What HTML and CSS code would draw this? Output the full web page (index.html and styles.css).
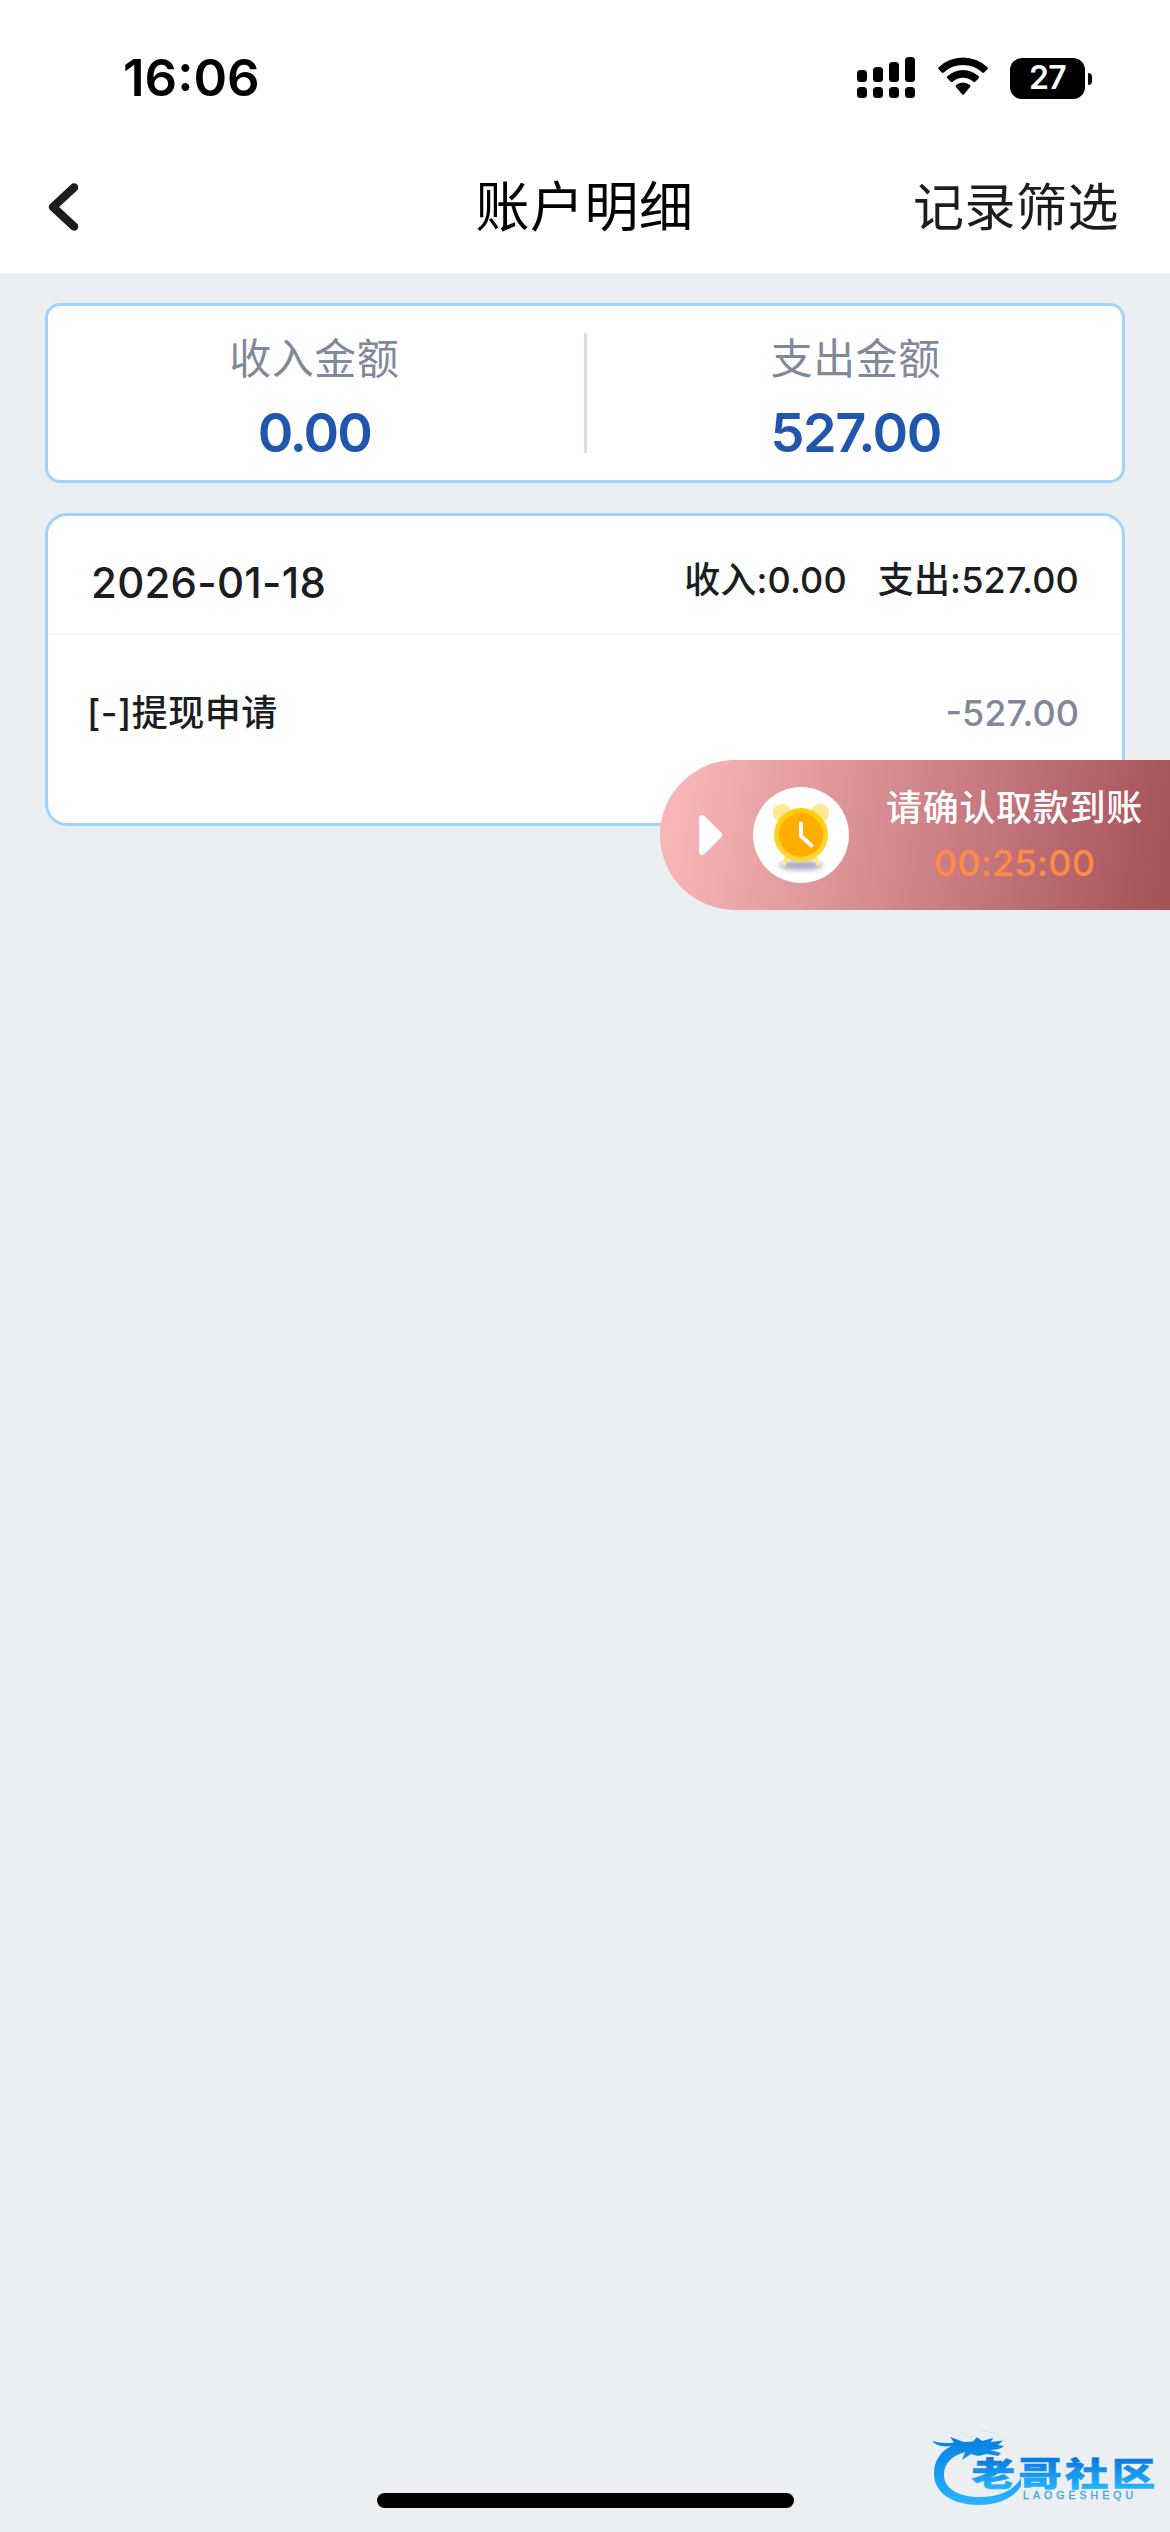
FILE: index.html
```html
<!DOCTYPE html>
<html lang="zh-CN">
<head>
<meta charset="utf-8">
<title>账户明细</title>
<link rel="stylesheet" href="styles.css">
</head>
<body>
<header class="top">
  <div class="status">
    <span class="clock">16:06</span>
    <div class="indicators">
      <svg class="signal" width="58" height="42" viewBox="0 0 58 42">
        <rect x="0" y="13" width="10" height="12" rx="3.5"/><rect x="16" y="10" width="10" height="15" rx="3.5"/><rect x="32" y="5" width="10" height="20" rx="3.5"/><rect x="48" y="0" width="10" height="25" rx="3.5"/>
        <rect x="0" y="30" width="10" height="11" rx="3.5"/><rect x="16" y="30" width="10" height="11" rx="3.5"/><rect x="32" y="30" width="10" height="11" rx="3.5"/><rect x="48" y="30" width="10" height="11" rx="3.5"/>
      </svg>
      <svg class="wifi" width="52" height="42" viewBox="0 0 52 42">
        <path d="M1.6 12.3Q.6 11.3 1.6 10.3A35.5 35.5 0 0 1 50.4 10.3Q51.4 11.3 50.4 12.3L47.2 15.5Q46.2 16.3 45.2 15.5A28 28 0 0 0 6.8 15.5Q5.8 16.3 4.8 15.5Z"/>
        <path d="M10.3 21.2Q9.4 20.2 10.3 19.3A23 23 0 0 1 41.7 19.3Q42.6 20.2 41.7 21.2L38.2 24.7Q37.3 25.5 36.3 24.7A15.5 15.5 0 0 0 15.7 24.7Q14.7 25.5 13.8 24.7Z"/>
        <path d="M19 30Q18 29 19 28A11 11 0 0 1 33 28Q34 29 33 30L27 37.3Q26 38.4 25 37.3Z"/>
      </svg>
      <div class="battery"><span class="level">27</span><span class="nub"></span></div>
    </div>
  </div>
  <nav class="nav">
    <svg class="back" width="30" height="48" viewBox="0 0 30 48"><path d="M26 4.5L5 24L26 43.500"/></svg>
    <h1 class="title">账户明细</h1>
    <span class="filter">记录筛选</span>
  </nav>
</header>
<main class="content">
  <section class="summary">
    <div class="total income"><span class="label">收入金额</span><span class="amount">0.00</span></div>
    <div class="divider"></div>
    <div class="total expense"><span class="label">支出金额</span><span class="amount">527.00</span></div>
  </section>
  <section class="day">
    <div class="day-head"><span class="date">2026-01-18</span><div class="sums"><span>收入:0.00</span><span>支出:527.00</span></div></div>
    <div class="entry"><span class="entry-name">[-]提现申请</span><span class="entry-amount">-527.00</span></div>
  </section>
</main>
<aside class="reminder">
  <svg class="play" width="24" height="42" viewBox="0 0 24 42"><path d="M0 4Q0 1 3 1Q4.500 1 6 2.500L22 18.500Q24.500 21 22 23.500L6 39.500Q4.500 41 3 41Q0 41 0 38Z"/></svg>
  <div class="disc">
    <svg width="96" height="96" viewBox="0 0 96 96">
      <defs>
        <linearGradient id="rim" x1="0" y1="0" x2="0" y2="1"><stop offset="0" stop-color="#ffcb05"/><stop offset="1" stop-color="#ffd640"/></linearGradient>
        <filter id="soft" x="-30%" y="-100%" width="160%" height="300%"><feGaussianBlur stdDeviation="2.5"/></filter>
      </defs>
      <ellipse cx="48" cy="78.500" rx="22" ry="4.500" fill="#aaa7c5" filter="url(#soft)"/>
      <path d="M34 70L31 77M62 70L65 77" stroke="#ffe784" stroke-width="4" stroke-linecap="round"/>
      <circle cx="29" cy="26" r="9.300" fill="#ffea94"/><circle cx="67" cy="26" r="9.300" fill="#ffea94"/>
      <circle cx="48" cy="48" r="27" fill="url(#rim)"/><circle cx="48" cy="48" r="22" fill="#ffae00"/>
      <path d="M48 36.500V49L58.500 58.500" fill="none" stroke="#fff" stroke-width="4" stroke-linecap="round" stroke-linejoin="round"/>
    </svg>
  </div>
  <div class="notice"><span class="notice-text">请确认取款到账</span><span class="countdown">00:25:00</span></div>
</aside>
<svg class="brand" width="226" height="84" viewBox="0 0 226 84">
  <defs><linearGradient id="sea" gradientUnits="userSpaceOnUse" x1="0" y1="14" x2="0" y2="80"><stop offset="0" stop-color="#087fe2"/><stop offset="1" stop-color="#28b4ff"/></linearGradient>
  <linearGradient id="ink" gradientUnits="userSpaceOnUse" x1="0" y1="-27" x2="0" y2="3"><stop offset="0" stop-color="#0879df"/><stop offset="1" stop-color="#25b4ff"/></linearGradient></defs>
  <path fill="url(#sea)" d="M2 17Q12 20 24 18.500L20 13L34 18L43 17.500L47 13L52 17L63 14L61 18L73 16.500L68 21L74 22Q70 26 60 26L71 29L68 32L57 30L48 32L41 30L32 36L35 28C22 32 14 39 14 51C14 65 29 73 50 73C71 73 84 66 91 54V62C84 74 68 81 49 81C23 81 4 69 4 50C4 37 10 28 21 22Q8 24 2 17Z"/>
  <path fill="none" stroke="#cfe4f4" stroke-width=".8" d="M30 8Q38 14 48 13M49 7Q67 7 73 15"/>
  <text class="brand-name" transform="translate(41.500 61.500) scale(1.32 1)" fill="url(#ink)" stroke="url(#ink)" stroke-width=".5">老哥社区</text>
  <text class="brand-latin" x="93" y="74.500" textLength="110" lengthAdjust="spacing">LAOGESHEQU</text>
</svg>
<div class="home"></div>
</body>
</html>
```
FILE: styles.css
```css
* { box-sizing: border-box; }
body {
  margin: 0;
  width: 1170px;
  height: 2532px;
  position: relative;
  overflow: hidden;
  background: #ebeff2;
  color: #1c1d21;
  font-family: Inter, "Noto Sans CJK SC", sans-serif;
}
.top { height: 273px; background: #fff; }
.status {
  height: 141px;
  padding: 15px 79px 0 123px;
  display: flex;
  align-items: center;
  justify-content: space-between;
}
.clock { font-size: 51px; font-weight: 600; line-height: 60px; color: #000; letter-spacing: 0; }
.indicators { display: flex; align-items: center; }
.wifi { margin-left: 22px; margin-right: 21px; }
.battery {
  position: relative;
  width: 75px;
  height: 41px;
  margin-right: 6px;
  border-radius: 12px;
  background: #000;
  display: flex;
  align-items: center;
  justify-content: center;
}
.level { font-size: 32px; font-weight: 600; line-height: 40px; letter-spacing: -.6px; color: #fff; }
.nub { position: absolute; left: 78px; top: 15px; width: 4px; height: 12px; border-radius: 0 4px 4px 0; background: #000; }
.nav {
  height: 132px;
  padding: 0 51px 0 48px;
  display: grid;
  grid-template-columns: 1fr 216px 1fr;
  align-items: center;
}
.back { fill: none; stroke: #1c1d21; stroke-width: 8.5; stroke-linecap: round; stroke-linejoin: round; }
.title { margin: 0; padding-top: 2px; font-size: 54px; font-weight: 400; line-height: 78px; letter-spacing: .5px; color: #000; white-space: nowrap; }
.filter { justify-self: end; padding-top: 2px; font-size: 51px; line-height: 76px; letter-spacing: .5px; }
.content { padding: 30px 45px 0; display: grid; gap: 30px; }
.summary {
  height: 180px;
  border: 3px solid #a0d4ff;
  border-radius: 15px;
  background: #fff;
  display: flex;
  align-items: center;
}
.total { flex: 1; padding-top: 9px; display: flex; flex-direction: column; align-items: center; }
.income { padding-right: 3px; }
.expense { padding-left: 3px; }
.label { font-size: 42px; line-height: 60px; letter-spacing: .5px; font-weight: 400; color: #82889b; }
.amount { margin-top: 11px; font-size: 54px; line-height: 66px; font-weight: 600; letter-spacing: -2px; color: #2156ae; }
.expense .amount { letter-spacing: -1.4px; }
.divider { width: 3px; height: 120px; background: #d8dcec; }
.day { height: 313px; border: 3px solid #a0d4ff; border-radius: 22px; background: #fff; }
.day-head {
  height: 119px;
  padding: 0 43px;
  border-bottom: 2px solid #f8f9fb;
  display: flex;
  justify-content: space-between;
  align-items: center;
}
.date { font-size: 42px; font-weight: 500; line-height: 54px; padding-top: 17px; letter-spacing: .25px; }
.sums { display: flex; gap: 31px; font-size: 36px; line-height: 52px; font-weight: 500; padding-top: 10px; letter-spacing: .15px; }
.entry { height: 156px; padding: 0 43px 0 39px; display: flex; align-items: center; justify-content: space-between; }
.entry-name { font-size: 36px; font-weight: 500; line-height: 52px; letter-spacing: .5px; }
.entry-amount { font-size: 36px; line-height: 52px; font-weight: 500; color: #82889b; }
.reminder {
  position: absolute;
  left: 660px;
  top: 760px;
  width: 510px;
  height: 150px;
  padding-left: 39px;
  border-radius: 75px 0 0 75px;
  background: linear-gradient(100deg, #f8b5b8 5%, #a55259 98%);
  display: flex;
  align-items: center;
}
.play { fill: #fff; }
.disc { width: 96px; height: 96px; margin-left: 30px; border-radius: 50%; background: #fff; }
.disc svg { display: block; }
.notice { margin-left: 37px; display: flex; flex-direction: column; align-items: center; }
.notice-text { font-size: 36px; line-height: 52px; font-weight: 500; letter-spacing: .7px; color: #fff; white-space: nowrap; }
.countdown { margin-top: 3px; font-size: 36px; line-height: 52px; font-weight: 500; letter-spacing: .3px; color: #ff8b46; }
.brand { position: absolute; left: 930px; top: 2424px; }
.brand-name { font: 900 33px "Noto Sans CJK SC", sans-serif; letter-spacing: 2.4px; }
.brand-latin { font: 10.5px "Liberation Sans", sans-serif; fill: #3d9fe8; stroke: #3d9fe8; stroke-width: .3px; }
.home { position: absolute; left: 377px; top: 2493px; width: 417px; height: 15px; border-radius: 8px; background: #000; }
```
